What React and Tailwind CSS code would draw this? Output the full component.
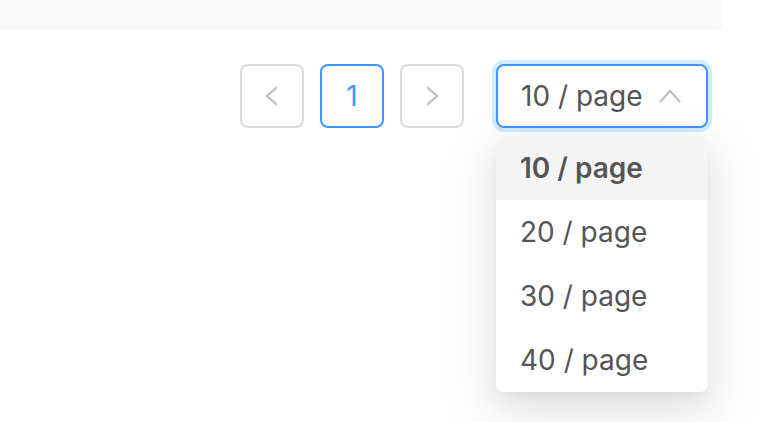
import React from "react";

export default function App() {
  const items = ["10 / page", "20 / page", "30 / page", "40 / page"];
  return (
    <div
      className="relative w-[768px] h-[422px] overflow-hidden bg-white"
      style={{ fontFamily: "Inter, 'Noto Sans', sans-serif" }}
    >
      <div className="h-[31px] w-[723px] bg-[#fafafa] rounded-br-[8px]" />
      <div className="mt-[33px] flex pl-[240px]">
        <div className="flex gap-[16px]">
          <button className="flex h-[64px] w-[64px] items-center justify-center rounded-[8px] border-2 border-[#d9d9d9] bg-white">
            <svg width="16" height="22" viewBox="0 0 16 22" fill="none">
              <polyline points="13,2 3,11 13,20" stroke="#bfbfbf" strokeWidth="2.2" strokeLinejoin="miter" />
            </svg>
          </button>
          <button className="flex h-[64px] w-[64px] items-center justify-center rounded-[8px] border-2 border-[#4096ff] bg-white text-[28px] text-[#4096ff]">
            1
          </button>
          <button className="flex h-[64px] w-[64px] items-center justify-center rounded-[8px] border-2 border-[#d9d9d9] bg-white">
            <svg width="16" height="22" viewBox="0 0 16 22" fill="none">
              <polyline points="3,2 13,11 3,20" stroke="#bfbfbf" strokeWidth="2.2" strokeLinejoin="miter" />
            </svg>
          </button>
        </div>
        <div className="relative ml-[32px] w-[212px]">
          <div className="flex h-[64px] w-[212px] items-center justify-between rounded-[8px] border-2 border-[#4096ff] bg-white pl-[23px] pr-[24px] shadow-[0_0_0_4px_rgba(5,145,255,0.18)]">
            <span className="text-[28px] text-[#555555]">10 / page</span>
            <svg width="24" height="16" viewBox="0 0 24 16" fill="none">
              <polyline points="2,14 12,3 22,14" stroke="#bfbfbf" strokeWidth="2.2" />
            </svg>
          </div>
          <div className="absolute left-0 top-[72px] w-[212px] overflow-hidden rounded-[8px] bg-white shadow-[0_12px_32px_0_rgba(0,0,0,0.08),0_6px_12px_-8px_rgba(0,0,0,0.12),0_18px_56px_16px_rgba(0,0,0,0.05)]">
            {items.map((t, i) => (
              <div
                key={t}
                className={
                  i === 0
                    ? "flex h-[64px] items-center bg-[#f5f5f5] pl-[24px] text-[28px] font-semibold text-[#555555]"
                    : "flex h-[64px] items-center pl-[24px] text-[28px] text-[#555555]"
                }
              >
                {t}
              </div>
            ))}
          </div>
        </div>
      </div>
    </div>
  );
}
